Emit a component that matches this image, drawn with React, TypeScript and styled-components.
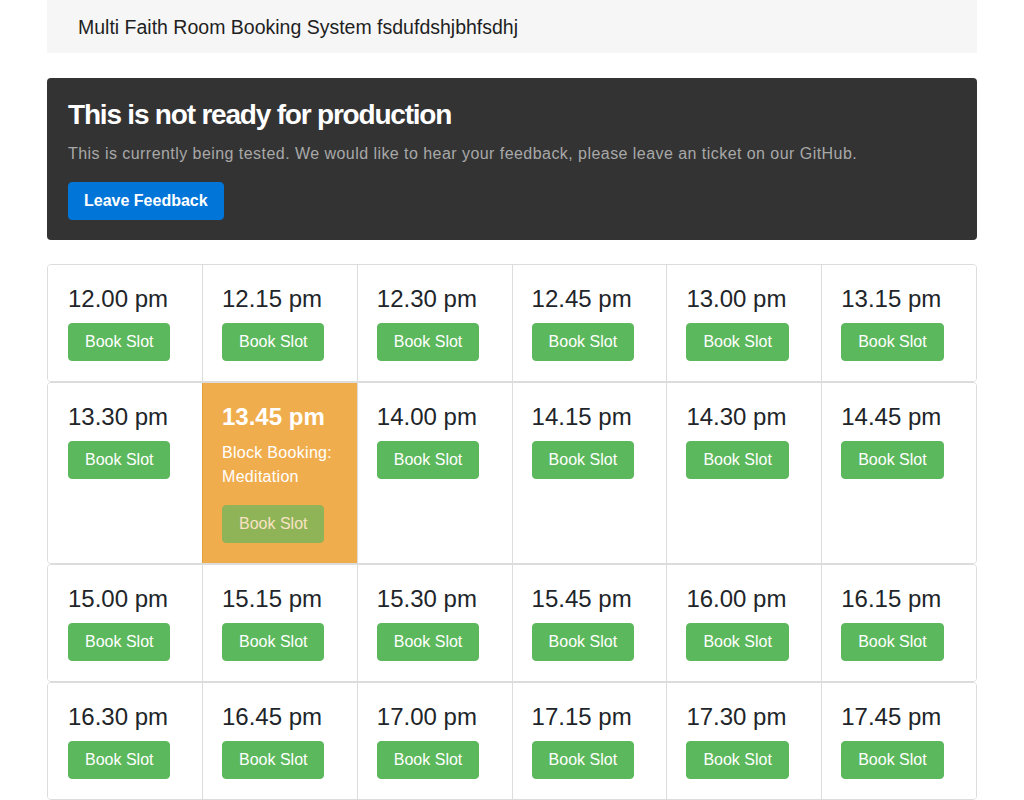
import React from "react";
import styled, { createGlobalStyle } from "styled-components";

const Global = createGlobalStyle`
  html, body { margin: 0; padding: 0; background: #fff; }
  body { font-family: "Liberation Sans", Arial, sans-serif; color: #212529; }
  * { box-sizing: border-box; }
`;

const Page = styled.div`
  width: 930px;
  margin: 0 auto;
`;

const Header = styled.header`
  height: 53px;
  background: #f6f6f6;
  display: flex;
  align-items: center;
  padding: 1px 0 0 31px;
  font-size: 19.5px;
  color: #1f1f1f;
`;

const Jumbotron = styled.section`
  margin-top: 25px;
  background: #333333;
  border-radius: 4px;
  padding: 20px 21px;
`;

const Title = styled.h1`
  margin: 0 0 10px;
  font-size: 28px;
  line-height: 1.2;
  font-weight: 700;
  color: #fff;
  letter-spacing: -1.2px;
`;

const Lead = styled.p`
  margin: 0 0 16px;
  font-size: 16px;
  line-height: 24px;
  color: #a8a8a8;
  letter-spacing: 0.45px;
`;

const BlueButton = styled.button`
  font-family: inherit;
  height: 38px;
  padding: 0 15px;
  font-size: 16px;
  font-weight: 700;
  color: #fff;
  background: #0275d8;
  border: 1px solid #0275d8;
  border-radius: 4px;
`;

const Grid = styled.div`
  margin-top: 24px;
  display: flex;
  flex-direction: column;
`;

const Row = styled.div`
  display: grid;
  grid-template-columns: 154px repeat(5, 1fr);
  border: 1px solid #dcdcdc;
  border-radius: 4px;
  overflow: hidden;
`;

const Cell = styled.div<{ $blocked?: boolean }>`
  padding: 19px 19px 20px;
  border-left: 1px solid ${(p) => (p.$blocked ? "#e39f3d" : "#dcdcdc")};
  background: ${(p) => (p.$blocked ? "#f0ad4e" : "#fff")};
  color: ${(p) => (p.$blocked ? "#fff" : "#212529")};
  &:first-child { border-left: none; padding-left: 20px; }
`;

const Time = styled.h4`
  margin: 0 0 9px;
  font-size: 24px;
  line-height: 30px;
  font-weight: 400;
  color: inherit;
`;

const BlockedTime = styled(Time)`
  font-weight: 700;
`;

const Note = styled.p`
  margin: 0 0 16px;
  font-size: 16px;
  line-height: 24px;
  font-weight: 400;
  letter-spacing: 0.3px;
`;

const GreenButton = styled.button<{ $disabled?: boolean }>`
  font-family: inherit;
  height: 38px;
  padding: 0 16px;
  font-size: 16px;
  color: #fff;
  background: #5cb85c;
  border: 1px solid #5cb85c;
  border-radius: 4px;
  opacity: ${(p) => (p.$disabled ? 0.65 : 1)};
`;

const times = [
  ["12.00", "12.15", "12.30", "12.45", "13.00", "13.15"],
  ["13.30", "13.45", "14.00", "14.15", "14.30", "14.45"],
  ["15.00", "15.15", "15.30", "15.45", "16.00", "16.15"],
  ["16.30", "16.45", "17.00", "17.15", "17.30", "17.45"],
];

export default function App() {
  return (
    <Page>
      <Global />
      <Header>Multi Faith Room Booking System fsdufdshjbhfsdhj</Header>
      <Jumbotron>
        <Title>This is not ready for production</Title>
        <Lead>
          This is currently being tested. We would like to hear your feedback, please leave an ticket on our GitHub.
        </Lead>
        <BlueButton>Leave Feedback</BlueButton>
      </Jumbotron>
      <Grid>
        {times.map((row, ri) => (
          <Row key={ri}>
            {row.map((t) =>
              t === "13.45" ? (
                <Cell key={t} $blocked>
                  <BlockedTime>{t} pm</BlockedTime>
                  <Note>
                    Block Booking:
                    <br />
                    Meditation
                  </Note>
                  <GreenButton $disabled>Book Slot</GreenButton>
                </Cell>
              ) : (
                <Cell key={t}>
                  <Time>{t} pm</Time>
                  <GreenButton>Book Slot</GreenButton>
                </Cell>
              )
            )}
          </Row>
        ))}
      </Grid>
    </Page>
  );
}
